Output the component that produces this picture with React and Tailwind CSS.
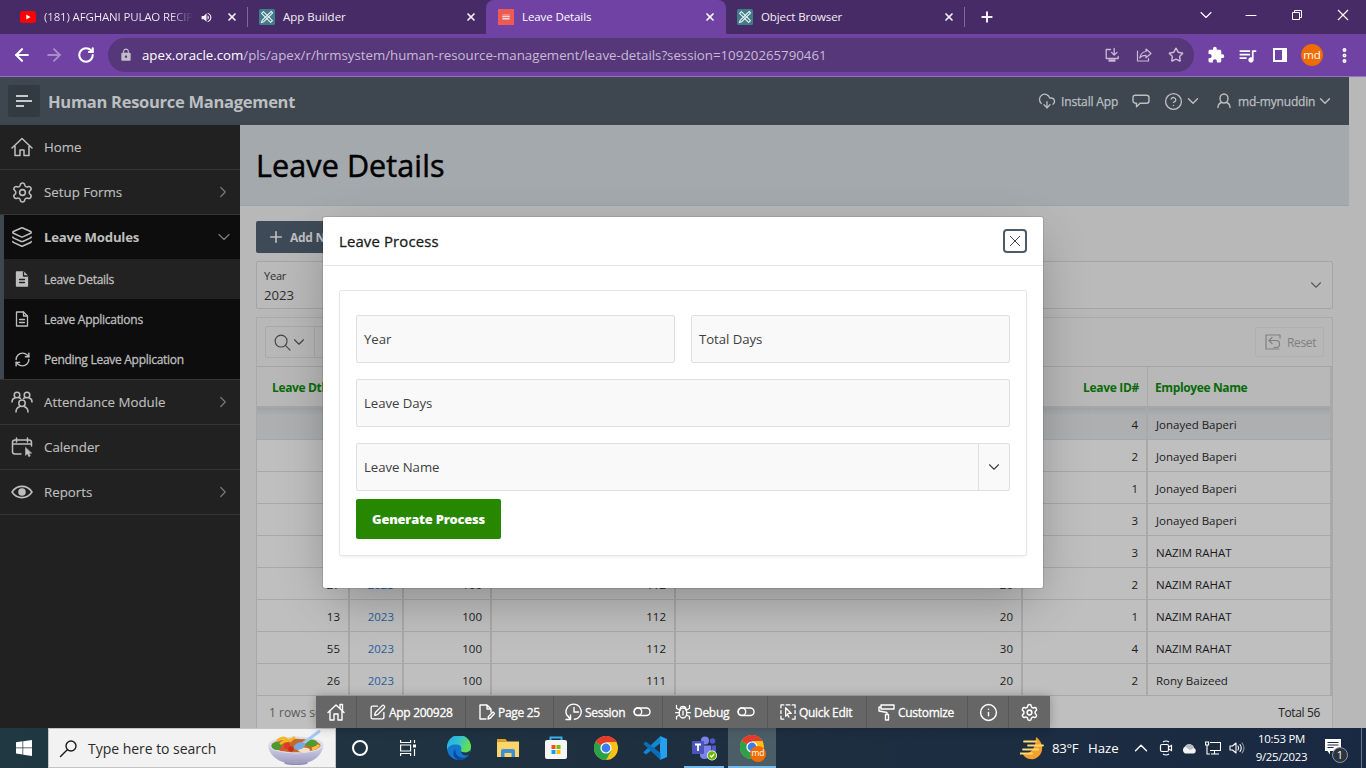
import React from "react";
import {
  ArrowLeft, ArrowRight, RotateCw, X, Plus, ChevronDown, ChevronRight, ChevronUp, Minus,
  Star, EllipsisVertical, Settings, Search, Layers, RefreshCw,
  CloudDownload, CircleHelp, Info, SquarePen,
} from "lucide-react";
import { MdExtension, MdLock, MdQueueMusic, MdVolumeUp } from "react-icons/md";

function Svg({ className = "", box = "0 0 24 24", w = 1.5, children }) {
  return (
    <svg viewBox={box} className={`shrink-0 ${className}`} fill="none" stroke="currentColor" strokeWidth={w} strokeLinecap="round" strokeLinejoin="round">
      {children}
    </svg>
  );
}

/* ---------- Browser chrome ---------- */

function ApexIcon() {
  return (
    <svg viewBox="0 0 16 16" className="size-4 shrink-0">
      <rect width="16" height="16" rx="1.5" fill="#437c89" />
      <g fill="none" stroke="#e8f2f3" strokeWidth="1.1" strokeLinejoin="round">
        <path d="M2.6 4.4 4.4 2.6 13.4 11.6 11.6 13.4z" />
        <path d="M12.2 2.4 13.6 3.8 4.6 12.8 2.4 13.6 3.2 11.4z" />
      </g>
    </svg>
  );
}

function TabClose() {
  return <X className="size-3 shrink-0" strokeWidth={3.4} />;
}

function TabStrip() {
  return (
    <div className="flex h-[34px] items-center bg-[#472b66] text-[11.5px] text-[#f3eff7]">
      <div className="flex h-[20px] w-[248px] shrink-0 items-center border-r border-[#7d699a] pl-5 pr-[9px]">
        <svg viewBox="0 0 16 12" className="h-3 w-4 shrink-0"><rect width="16" height="12" rx="3" fill="#f00" /><path d="M6.3 3.6 10.5 6 6.3 8.4z" fill="#fff" /></svg>
        <span className="ml-2 w-[149px] overflow-hidden whitespace-nowrap bg-linear-to-r from-[#f3eff7] from-85% to-[#472b66] bg-clip-text tracking-[-0.16px] text-transparent">(181) AFGHANI PULAO RECIPE</span>
        <MdVolumeUp className="ml-[7px] size-[13px] shrink-0" />
        <span className="ml-auto"><TabClose /></span>
      </div>
      <div className="flex w-[238px] shrink-0 items-center pl-[11px] pr-[9px]">
        <ApexIcon /><span className="ml-2">App Builder</span><span className="ml-auto"><TabClose /></span>
      </div>
      <div className="flex h-[34px] w-[240px] shrink-0 items-center rounded-t-lg bg-[#6f42a3] pl-3 pr-[10px] text-white">
        <svg viewBox="0 0 16 16" className="size-4 shrink-0"><rect width="16" height="16" fill="#ec5b53" /><path d="M4.5 5.8h7" stroke="#f39c97" strokeWidth="1" /><path d="M4.2 7.500h7.600M4.500 9.700h7" stroke="#fbdad8" strokeWidth="1.600" /></svg>
        <span className="ml-2 tracking-[-0.1px]">Leave Details</span><span className="ml-auto"><TabClose /></span>
      </div>
      <div className="flex h-[20px] w-[239px] shrink-0 items-center border-r border-[#7d699a] pl-[11px] pr-[9px]">
        <ApexIcon /><span className="ml-2 tracking-[-0.1px]">Object Browser</span><span className="ml-auto"><TabClose /></span>
      </div>
      <Plus className="ml-[14px] size-4" strokeWidth={3} />
      <div className="ml-auto flex items-center pb-[5px] text-white">
        <ChevronDown className="mr-[29px] size-5" strokeWidth={1.3} />
        <Svg className="mr-[34px] size-3" box="0 0 12 12" w={1}><path d="M1 6.500h10" /></Svg>
        <svg viewBox="0 0 12 12" className="mr-[34px] size-3" fill="none" stroke="currentColor"><path d="M1.5 3.5h7v7h-7zM3.5 3.5v-2h7v7h-2" /></svg>
        <svg viewBox="0 0 12 12" className="mr-[17px] size-3" fill="none" stroke="currentColor" strokeWidth="1.2"><path d="M1 1 11 11M11 1 1 11" /></svg>
      </div>
    </div>
  );
}

function AddressBar() {
  return (
    <div className="flex h-[43px] items-center border-b border-[#9873bd] bg-[#6f42a3] text-white">
      <ArrowLeft className="ml-3 size-5" strokeWidth={2.6} />
      <ArrowRight className="ml-3 size-5 text-[#a98bc9]" strokeWidth={2.3} />
      <RotateCw className="ml-[13px] size-[18px]" strokeWidth={2.8} />
      <div className="ml-[13px] flex h-[34px] w-[1086px] items-center rounded-full bg-[#56377a] pl-[11px] text-[13.25px] text-[#c8bad6]">
        <MdLock className="size-[14px] text-[#c1bcc8]" />
        <span className="ml-[9px] whitespace-nowrap pt-px"><span className="text-white">apex.oracle.com</span>/pls/apex/r/hrmsystem/human-resource-management/leave-details?session=10920265790461</span>
        <div className="ml-auto mr-[10px] flex items-center gap-4">
          <Svg className="size-4" box="0 0 16 16" w={1.3}><path d="M6.5 2.5H2.2v9h12V9.5M10.2 1.5v6.2M7.5 5.4l2.7 2.7 2.8-2.7" /><path d="M4.500 13.500h7" strokeWidth="2.500" strokeLinecap="butt" /></Svg>
          <Svg className="size-4" box="0 0 16 16" w={1.200}><path d="M1.5 4v10h11v-2.5" /><path d="M10 2l5 4.500-5 4.300V8.400C7 8.300 5 9.300 3.800 11 4.300 7.500 6.300 5 10 4.500z" /></Svg>
          <Star className="size-4" strokeWidth={2.200} />
        </div>
      </div>
      <MdExtension className="ml-[13px] size-[18px]" />
      <MdQueueMusic className="ml-[12px] size-[21px]" />
      <svg viewBox="0 0 14 14" className="ml-[15px] size-[14px]"><path fill="currentColor" fillRule="evenodd" d="M0 0h14v14H0zM2 2v10h7V2z" /></svg>
      <div className="ml-[14px] flex size-[22px] items-center justify-center rounded-full bg-[#ee6c02] pb-px text-[11.5px]">md</div>
      <EllipsisVertical className="ml-[12px] size-[19px]" strokeWidth={3} />
    </div>
  );
}

/* ---------- Application ---------- */

function AppHeader() {
  return (
    <header className="flex h-12 w-[1349px] items-center bg-[#3e474f] text-[#bcbfc1]">
      <div className="ml-2 flex size-8 items-center justify-center rounded-xs bg-[#333b42]">
        <Svg className="size-4 text-[#c6c8ca]" box="0 0 16 16" w={2}><path d="M0 3h12M0 8h16M0 13h8" strokeLinecap="butt" /></Svg>
      </div>
      <h1 className="ml-2 pt-[2px] text-[16.500px] font-bold tracking-[-0.280px]">Human Resource Management</h1>
      <div className="ml-auto mr-[15px] flex items-center text-[12px] [-webkit-text-stroke:0.25px]">
        <CloudDownload className="size-[18px]" strokeWidth={1.700} />
        <span className="ml-[5px] w-[71px] whitespace-nowrap pt-[2px] tracking-[-0.150px]">Install App</span>
        <Svg className="size-[18px]" box="0 0 18 18" w={1.400}><path d="M3.500 3.200h11q2.500 0 2.500 2.500v3q0 2.500-2.500 2.500H8l-3.500 3.500v-3.500h-1Q1 11.200 1 8.700v-3q0-2.500 2.500-2.500z" /></Svg>
        <CircleHelp className="ml-[14px] size-[19px]" strokeWidth={1.700} />
        <ChevronDown className="ml-px size-[18px]" strokeWidth={1.900} />
        <Svg className="ml-[14px] size-[16px]" box="0 0 16 16" w={1.400}><ellipse cx="8" cy="5.500" rx="4" ry="4.500" /><path d="M5.500 9.500C3 10.300 2 11.800 2 14.500M10.500 9.500C13 10.300 14 11.800 14 14.500" /></Svg>
        <span className="ml-[6px] w-[78px] whitespace-nowrap pt-[2px] tracking-[-0.180px]">md-mynuddin</span>
        <ChevronDown className="size-[18px]" strokeWidth={1.900} />
      </div>
    </header>
  );
}

const HomeGlyph = () => (
  <Svg className="size-[22px]" box="0 0 22 22" w={1.5}><path d="M1 12 11 2.500 21 12M4 10v9.500h5v-5.500h4v5.500h5V10" /></Svg>
);
const TeamGlyph = () => (
  <Svg className="size-[22px]" box="0 0 22 22" w={1.500}>
    <circle cx="6" cy="4" r="2.800" /><circle cx="16" cy="4" r="2.800" /><circle cx="11" cy="12.300" r="3.200" />
    <path d="M1 11c0-2.300 1-3.700 3-4M21 11c0-2.300-1-3.700-3-4M9.500 7.500C9 7 8.500 6.800 8 6.700M12.500 7.500c.5-.5 1-.7 1.500-.8M5 21c0-3 1-4.500 3.500-5.300M17 21c0-3-1-4.500-3.500-5.300" />
  </Svg>
);
const CalendarGlyph = () => (
  <Svg className="size-[22px]" box="0 0 22 22" w={1.500}>
    <path d="M10 18H4q-2.500 0-2.500-2.500v-9Q1.500 4 4 4h14q2.500 0 2.500 2.500V10M1.500 8h19M5.500 2v4M16.500 2v4" />
    <path d="M14.500 11.500v8l2-1.800 1.300 3 1.500-.7-1.300-2.800h2.500z" fill="currentColor" strokeWidth=".5" />
  </Svg>
);
const FileGlyph = ({ solid }) => (
  <Svg className="size-4" box="0 0 16 16" w={1.300}>
    <path d="M2.500 1h7l4 4v10h-11z" fill={solid ? "currentColor" : "none"} />
    <path d="M9.500 1v4h4M5.500 8.500h5M5.500 11.500h5" stroke={solid ? "#212121" : "currentColor"} />
  </Svg>
);

function NavItem({ icon, label, arrow }) {
  return (
    <div className="flex h-[45px] items-center border-b border-[#363636] pl-[11px] pr-[8px]">
      <span className="flex w-[33px]">{icon}</span>
      <span className="pt-px text-[13.300px] [-webkit-text-stroke:0.15px]">{label}</span>
      {arrow && <ChevronRight className="ml-auto size-[18px] text-[#777]" strokeWidth={1.700} />}
    </div>
  );
}

function SubItem({ icon, label, active }) {
  return (
    <div className={`flex h-10 items-center pl-[10px] text-[12px] tracking-[-0.280px] [-webkit-text-stroke:0.3px] ${active ? "bg-[#222]" : ""}`}>
      <span className="flex w-[30px]">{icon}</span><span className="pt-[2px]">{label}</span>
    </div>
  );
}

function Sidebar() {
  return (
    <nav className="h-full w-60 shrink-0 bg-[#212121] text-[#bebebe]">
      <NavItem icon={<HomeGlyph />} label="Home" />
      <NavItem icon={<Settings className="size-[23px]" strokeWidth={1.600} />} label="Setup Forms" arrow />
      <div className="border-b border-[#363636]">
        <div className="border-l-4 border-[#3e474f] bg-[#0d0d0d]">
          <div className="flex h-[44px] items-center pl-[7px] pr-[6px]">
            <span className="flex w-[33px]"><Layers className="size-[22px]" strokeWidth={1.700} /></span>
            <span className="pt-[2px] text-[13.200px] font-bold tracking-[-0.220px]">Leave Modules</span>
            <ChevronDown className="ml-auto size-5 text-[#777]" strokeWidth={1.600} />
          </div>
          <SubItem icon={<FileGlyph solid />} label="Leave Details" active />
          <SubItem icon={<FileGlyph />} label="Leave Applications" />
          <SubItem icon={<RefreshCw className="size-[17px]" strokeWidth={2} />} label="Pending Leave Application" />
        </div>
      </div>
      <NavItem icon={<TeamGlyph />} label="Attendance Module" arrow />
      <NavItem icon={<CalendarGlyph />} label="Calender" />
      <NavItem icon={<Svg className="size-[22px]" box="0 0 22 22" w={1.600}><path d="M1 11c5-7.500 15-7.500 20 0-5 7.500-15 7.500-20 0z" /><circle cx="11" cy="11" r="3" fill="currentColor" /></Svg>} label="Reports" arrow />
    </nav>
  );
}

const ROWS = [
  ["", "", "", "", "", "4", "Jonayed Baperi"],
  ["", "", "", "", "", "2", "Jonayed Baperi"],
  ["", "", "", "", "", "1", "Jonayed Baperi"],
  ["", "", "", "", "", "3", "Jonayed Baperi"],
  ["", "", "", "", "", "3", "NAZIM RAHAT"],
  ["27", "2023", "100", "112", "20", "2", "NAZIM RAHAT"],
  ["13", "2023", "100", "112", "20", "1", "NAZIM RAHAT"],
  ["55", "2023", "100", "112", "30", "4", "NAZIM RAHAT"],
  ["26", "2023", "100", "111", "20", "2", "Rony Baizeed"],
];
const GRID = "grid grid-cols-[93px_54px_88px_184px_347px_125px_184px]";

function LeaveGrid() {
  return (
    <section className="mt-2 flex h-[411px] w-[1077px] flex-col border border-b-0 border-[#a9a9a9] bg-[#b8b8b8]">
      <div className="flex h-[48px] shrink-0 items-center justify-between pl-2 pr-[8px]">
        <div className="flex h-8 w-[300px] rounded-xs border border-[#a9a9a9] text-[#444]">
          <div className="flex w-[49px] items-center border-r border-[#a9a9a9] pl-2">
            <Svg className="size-[17px]" box="0 0 18 18" w={1.200}><circle cx="7.500" cy="7.500" r="6.300" /><path d="m12 12 5 5" /></Svg>
            <ChevronDown className="-ml-px size-[18px]" strokeWidth={1.500} />
          </div>
        </div>
        <div className="flex h-[30px] w-[69px] items-center rounded-xs border border-[#b0b0b0] pl-[9px] text-[12px] text-[#808080]">
          <Svg className="size-4" box="0 0 16 16" w={1.200}><path d="M15 4V1H1v14h13M4 6.500h7.500q3 0 3 3.500t-3 3.500H9M7 3.500l-3 3 3 3" /></Svg>
          <span className="ml-[6px] pt-px tracking-[-0.350px]">Reset</span>
        </div>
      </div>
      <div className={`${GRID} h-[42px] shrink-0 items-stretch border-b-2 border-t border-b-[#a6a7a7] border-t-[#a5a5a5] text-[12px] font-bold text-[#076b07]`}>
        <span className="flex items-center overflow-hidden whitespace-nowrap pl-[15px] pt-[2px] tracking-[-0.350px]">Leave Dtl</span>
        <span /><span /><span /><span />
        <span className="flex items-center justify-end border-r border-[#a9a9a9] pr-2 pt-[2px] tracking-[-0.300px]">Leave ID#</span>
        <span className="flex items-center border-r-2 border-[#a9a9a9] pl-[7px] pt-[2px] tracking-[-0.380px]">Employee Name</span>
      </div>
      {ROWS.map((row, i) => (
        <div key={i} className={`${GRID} h-8 shrink-0 border-b border-[#a8a8a8] text-[11.500px] text-[#1c1c1c] ${i === 0 ? "bg-linear-to-b from-[#a2a4a4] to-[#adafb1] to-25%" : "bg-[#bfbfbf]"}`}>
          {row.map((cell, j) => (
            <span key={j} className={`flex items-center border-r-2 border-[#a9a9a9] pt-[3px] ${j === 6 ? "pl-2" : "justify-end pr-[8px]"} ${j === 1 ? "text-[#27619c]" : ""}`}>{cell}</span>
          ))}
        </div>
      ))}
      <div className="flex flex-1 items-center justify-between bg-[#bfbfbf] pl-3 pr-[12px] pt-[2px] text-[12px]">
        <span className="text-[#5a5a5a]">1 rows se</span>
        <span className="tracking-[-0.350px] text-[#222]">Total 56</span>
      </div>
    </section>
  );
}

function Page() {
  return (
    <main className="flex min-w-0 flex-1 flex-col bg-[#b8b8b8]">
      <div className="flex h-[81px] w-[1109px] shrink-0 items-center border-b border-[#9ea2a5] bg-[#a4a9ad] pl-4">
        <h2 className="pt-px text-[30.500px] tracking-[0.100px] text-black [-webkit-text-stroke:0.5px]">Leave Details</h2>
      </div>
      <div className="pl-4">
        <div className="mt-[15px] flex h-8 w-[80px] items-center overflow-hidden whitespace-nowrap rounded-xs bg-[#3e4a57] pl-[11px] text-[12px] font-bold text-[#bfbfbf]">
          <Plus className="size-[18px] shrink-0" strokeWidth={2.200} /><span className="ml-[5px] pt-px tracking-[-0.300px]">Add N</span>
        </div>
        <div className="mt-2 flex h-[48px] w-[1077px] items-center justify-between rounded-xs border border-[#a5a5a5] bg-[#bababa] pl-[7px] pr-[7px]">
          <div className="flex flex-col pt-[3px] text-[#2d2d2d]">
            <span className="text-[11px] leading-[18px] tracking-[-0.200px]">Year</span>
            <span className="text-[13.200px] leading-[21px]">2023</span>
          </div>
          <ChevronDown className="size-[18px] text-[#5a5a5a]" strokeWidth={1.500} />
        </div>
        <LeaveGrid />
      </div>
    </main>
  );
}

function Field({ label, select }) {
  return (
    <div className="flex h-12 items-stretch rounded-xs border border-[#dfdfdf] bg-[#f9f9f9] text-[13.200px] text-[#404040]">
      <span className="flex flex-1 items-center pl-[7px] pt-[2px] tracking-[-0.050px]">{label}</span>
      {select && (
        <span className="flex w-[31px] items-center justify-center border-l border-[#dfdfdf]"><ChevronDown className="size-[18px]" strokeWidth={1.500} /></span>
      )}
    </div>
  );
}

function Dialog() {
  return (
    <div className="absolute left-[323px] top-[217px] h-[371px] w-[720px] rounded-xs bg-white shadow-[0_0_0_1px_rgba(0,0,0,0.1),0_16px_48px_-8px_rgba(0,0,0,0.3)]">
      <div className="flex h-[49px] items-center justify-between border-b border-[#e6e6e6] px-4">
        <span className="text-[14.900px] tracking-[0.150px] text-[#1b1b1b] [-webkit-text-stroke:0.3px]">Leave Process</span>
        <span className="flex size-6 items-center justify-center rounded-[4px] border-2 border-[#4b5b69] text-[#444]">
          <svg viewBox="0 0 12 12" className="size-3" fill="none" stroke="currentColor"><path d="M1 1 11 11M11 1 1 11" /></svg>
        </span>
      </div>
      <div className="mx-4 mt-6 h-[266px] rounded-xs border border-[#e6e6e6] px-4 pt-6 shadow-[0_2px_4px_-2px_rgba(0,0,0,0.12)]">
        <div className="grid grid-cols-2 gap-4">
          <Field label="Year" />
          <Field label="Total Days" />
          <div className="col-span-2"><Field label="Leave Days" /></div>
          <div className="col-span-2"><Field label="Leave Name" select /></div>
        </div>
        <div className="mt-2 flex h-10 w-[145px] items-center justify-center whitespace-nowrap rounded-xs bg-[#278701] pt-px text-[12.900px] font-extrabold tracking-[-0.200px] text-white">Generate Process</div>
      </div>
    </div>
  );
}

const Toggle = () => (
  <svg viewBox="0 0 18 10" className="h-[10px] w-[18px] shrink-0" fill="none" stroke="currentColor" strokeWidth="1.400"><rect x="1" y="1" width="16" height="7.500" rx="3.700" /><circle cx="5" cy="4.700" r="3.700" /></svg>
);

function DevToolbar() {
  const cell = "flex items-center border-r border-[#575757]";
  return (
    <div className="absolute left-[316px] top-[696px] flex h-8 w-[734px] items-stretch whitespace-nowrap bg-[#666] text-[12px] tracking-[-0.300px] text-white shadow-[0_0_10px_rgba(0,0,0,0.25)] [-webkit-text-stroke:0.3px]">
      <div className={`${cell} w-[41px] justify-center`}><Svg className="size-[18px]" box="0 0 18 18" w={1.400}><path d="M1 9.500 9 2l8 7.500M3 8v9h4v-6h4v6h4V8M13 5.500V1.500h2.500V8" /></Svg></div>
      <div className={`${cell} w-[109px] pl-[12px]`}><SquarePen className="size-[17px]" strokeWidth={1.900} /><span className="ml-[3px] pt-[2px]">App 200928</span></div>
      <div className={`${cell} w-[88px] pl-[13px]`}>
        <Svg className="size-4" box="0 0 16 16" w={1.400}><path d="M7 15H1V1h7l4 4v3M8 1v4h4M9 15l.5-2.500L14 8l1.500 1.500L11.500 14z" /></Svg><span className="ml-[3px] pt-[2px]">Page 25</span>
      </div>
      <div className={`${cell} w-[109px] pl-[11px]`}>
        <Svg className="size-[18px]" box="0 0 18 18" w={1.400}><path d="M2 12.500A7.600 7.600 0 1 1 9.500 16.300M9 4.500V9h4.500M1 16.500h4.500V12M5.500 16.500 2.500 12.500" /></Svg><span className="ml-[2px] w-[40px] pt-[2px]">Session</span><span className="ml-[8px]"><Toggle /></span>
      </div>
      <div className={`${cell} w-[105px] pl-[12px]`}>
        <Svg className="size-4" box="0 0 16 16" w={1.300}><ellipse cx="8" cy="9" rx="3.800" ry="5" /><path d="M5 5.500C5 3 6.500 2.500 8 2.500s3 .5 3 3M8 7v4M1.500 1.500v2.700L5 6.500M14.500 1.500v2.700L11 6.500M.7 8.700h3.500M15.300 8.700h-3.500M1.500 15v-2.500L4.700 11M14.500 15v-2.500L11.300 11" /></Svg>
        <span className="ml-[3px] w-[36px] pt-[2px]">Debug</span><span className="ml-[7px]"><Toggle /></span>
      </div>
      <div className={`${cell} w-[99px] pl-[12px]`}>
        <Svg className="size-4" box="0 0 17 17" w={1.400}><path d="M1 4V1h3M6.500 1h4M13 1h3v3M16 7v3M16 13v3h-3M4 16H1v-3M1 10V7" /><path d="M6 4v9l2-2 1.500 3M6 4l6 6H8.500" /></Svg><span className="ml-[3px] pt-[2px]">Quick Edit</span>
      </div>
      <div className={`${cell} w-[101px] pl-[11px]`}>
        <Svg className="size-[17px]" box="0 0 17 17" w={1.400}><path d="M3 1h13v4H3zM3 3H1v4l8 1.500v2M7.500 10.500h3V16h-3z" /></Svg><span className="ml-[3px] pt-[2px]">Customize</span>
      </div>
      <div className={`${cell} w-[41px] justify-center`}><Info className="size-[19px]" strokeWidth={1.800} /></div>
      <div className="flex flex-1 items-center justify-center pr-px"><Settings className="size-[19px]" strokeWidth={1.900} /></div>
    </div>
  );
}

/* ---------- Taskbar ---------- */

function Bowl() {
  return (
    <svg viewBox="0 0 56 36" className="h-9 w-14">
      <defs><linearGradient id="bowl" x1="0" y1="0" x2="0" y2="1"><stop offset="0" stopColor="#d9d7ea" /><stop offset="1" stopColor="#9c98bf" /></linearGradient></defs>
      <ellipse cx="28" cy="33" rx="12" ry="2" fill="#8f8bb0" />
      <path d="M0 15C1 27 13 34 28 34S54 27 55.500 15z" fill="url(#bowl)" />
      <ellipse cx="28" cy="15" rx="27.500" ry="8.500" fill="#dedcec" />
      <ellipse cx="28" cy="15.500" rx="24.500" ry="6.800" fill="#c26a2c" />
      <ellipse cx="9" cy="16" rx="5.500" ry="4" fill="#4b9a2d" /><ellipse cx="43" cy="13" rx="6.500" ry="3.500" fill="#4c9d30" />
      <path d="M9 11q5-5 9-2t9-2M12 14q6-5 12-3" fill="none" stroke="#f5b622" strokeWidth="2.600" />
      <path d="M44 19q5-1 7-4" stroke="#f7c33d" strokeWidth="3" fill="none" />
      <circle cx="19" cy="16" r="3.200" fill="#df3a27" /><circle cx="23" cy="19" r="2.800" fill="#c92c1d" /><circle cx="14" cy="19" r="2.300" fill="#e3502e" />
      <ellipse cx="36" cy="20" rx="6" ry="2.500" fill="#f8dfc6" />
      <path d="M33 15 51 1.500" stroke="#a5c8f0" strokeWidth="3" strokeLinecap="round" />
      <ellipse cx="31.500" cy="16" rx="6" ry="3.500" fill="#79a9dc" transform="rotate(-20 31.500 16)" />
    </svg>
  );
}

function ChromeLogo() {
  return (
    <svg viewBox="0 0 24 24" className="size-6">
      <circle cx="12" cy="12" r="12" fill="#fbc116" />
      <path d="M12 12 1.600 6A12 12 0 0 1 22.400 6z" fill="#e33b2e" />
      <path d="M12 12 1.600 6A12 12 0 0 0 12 24l5.200-9z" fill="#2ba14b" />
      <path d="M12 6h10.400L17.200 15z" fill="#fbc116" /><circle cx="12" cy="12" r="5.600" fill="#fff" /><circle cx="12" cy="12" r="4.400" fill="#3b7ded" />
    </svg>
  );
}

function Taskbar() {
  const slot = "flex h-10 items-center justify-center shrink-0";
  return (
    <footer className="flex h-10 w-full items-center bg-linear-to-r from-[#203842] via-[#1e2f40] to-[#1a2942] text-white">
      <div className={`${slot} w-12`}><svg viewBox="0 0 16 16" className="size-4" fill="#fff"><path d="M0 2.200 6.500 1.300v6.200H0zM7.200 1.200 16 0v7.500H7.200zM0 8.200h6.500v6.300L0 13.600zM7.200 8.200H16V16l-8.800-1.300z" /></svg></div>
      <div className="flex h-10 w-72 shrink-0 items-center border border-[#c4c4c4] bg-[#f2f2f2] pl-[10px] pr-[11px] text-[#2b2b2b]">
        <Svg className="size-[19px] text-[#1b1b1b]" box="0 0 19 19" w={1.400}><circle cx="12" cy="7" r="5" /><path d="M8.300 10.700 1.500 17.500" /></Svg>
        <span className="ml-[10px] text-[14px] tracking-[-0.030px]">Type here to search</span>
        <span className="ml-auto"><Bowl /></span>
      </div>
      <div className={`${slot} w-12`}><div className="size-4 rounded-full border-2 border-white" /></div>
      <div className={`${slot} w-[48px]`}><svg viewBox="0 0 16 16" className="size-4" fill="none" stroke="#fff" strokeWidth="1.200"><path d="M.6 0v2.500h10V0M.6 5h10v6H.6zM.6 16v-2.500h10V16M14.500 0v3M14.500 9v7" /><path d="M13 4.500h3v3h-3z" fill="#fff" stroke="none" /></svg></div>
      <div className={`${slot} w-[53px]`}>
        <svg viewBox="0 0 24 24" className="size-6">
          <defs><linearGradient id="edge" x1="0" y1="0" x2="1" y2=".4"><stop offset="0" stopColor="#2aa8e6" /><stop offset=".5" stopColor="#2fc0d5" /><stop offset="1" stopColor="#66e04d" /></linearGradient></defs>
          <circle cx="12" cy="12" r="12" fill="#1177cf" />
          <path d="M0 11A12 12 0 0 1 24 11c0 3.500-2.500 5.500-6 5.500-3 0-4.500-1-4-2.200.8-1.500.5-5.300-4-5.800C5 8 1 10 0 14z" fill="url(#edge)" />
          <path d="M8.500 13c-1 4 2 8.500 7 8.800 2 0 4-.6 6-2.500A12 12 0 0 1 11 24C6 22 5 16 8.500 13z" fill="#0d4a9e" />
          <path d="M14 14.300c-.5 1.200 1 2.200 4 2.200 2 0 3.500-.6 5-1.500v3.300c-5 2.700-9 .5-9-4z" fill="#203842" />
        </svg>
      </div>
      <div className={`${slot} w-[45px]`}>
        <svg viewBox="0 0 22 20" className="h-5 w-[22px]"><path d="M0 1h8.500l2 2.500H0z" fill="#e6a117" /><path d="M0 3.500h22V19H0z" fill="#ffd569" /><path d="M4 19v-6q0-2 2-2h10q2 0 2 2v6h-3.500v-4h-7v4z" fill="#3f8fd8" /></svg>
      </div>
      <div className={`${slot} w-[52px]`}>
        <svg viewBox="0 0 24 24" className="size-6"><path d="M6.500 5V1.500h11V5" fill="none" stroke="#35b3ea" strokeWidth="2" /><rect x="1" y="4" width="22" height="19" rx="2" fill="#f5f5f5" /><path d="M7.500 9h4v4h-4z" fill="#f25022" /><path d="M12.500 9h4v4h-4z" fill="#7fba00" /><path d="M7.500 14h4v4h-4z" fill="#00a4ef" /><path d="M12.500 14h4v4h-4z" fill="#ffb900" /></svg>
      </div>
      <div className={`${slot} w-[48px]`}><ChromeLogo /></div>
      <div className={`${slot} w-[49px]`}>
        <svg viewBox="0 0 24 24" className="size-6"><path d="M17 0 24 3v18l-7 3z" fill="#25a0ee" /><path d="M17.500 0v7L3 18.500.3 16.300z" fill="#1287d2" /><path d="M.3 7.700 3 5.500 17.500 17v7z" fill="#0a6fb8" /></svg>
      </div>
      <div className="flex h-10 w-[49px] shrink-0 justify-center">
        <div className="flex h-10 w-10 items-center justify-center border-b-2 border-[#76b9ed]">
          <svg viewBox="0 0 26 26" className="mt-1 size-[26px]">
            <circle cx="14" cy="4.500" r="4" fill="#7b83eb" /><circle cx="21.500" cy="5" r="2.800" fill="#5059c9" />
            <path d="M9 9.500h11V18q-2 5-6.500 5T9 19z" fill="#7b83eb" /><path d="M20.500 9.500H25v7q-1 3-4.500 3z" fill="#5059c9" />
            <rect x="1" y="5" width="12" height="13" rx="1" fill="#4b53bc" /><path d="M4 8.500h6M7 8.500V15" stroke="#fff" strokeWidth="1.800" />
            <circle cx="21" cy="19.500" r="5" fill="#fff" /><circle cx="21" cy="19.500" r="4.300" fill="#6bb700" /><path d="m19 19.500 1.500 1.500 2.700-3" stroke="#fff" strokeWidth="1.300" fill="none" />
          </svg>
        </div>
      </div>
      <div className={`${slot} relative w-12 border-b-2 border-[#76b9ed] bg-[#4b5d67]`}>
        <ChromeLogo />
        <span className="absolute left-[22px] top-[18px] flex size-4 items-center justify-center rounded-full bg-[#ee6c02] pb-px text-[8.500px]">md</span>
      </div>
      <div className="ml-auto flex h-10 items-center">
        <svg viewBox="0 0 24 24" className="mr-2 size-6"><path d="M16 1C25 7 24 20 14 23 8 24 4 21 3 18c9 0 13-7 13-17z" fill="#f5a02a" /><path d="M4 5.500h12M8 9.500h15M3 13.500h15M0 17.500h12" stroke="#ffd873" strokeWidth="1.800" strokeLinecap="round" /></svg>
        <span className="w-[36px] whitespace-nowrap pt-px text-[13.200px] tracking-[-0.300px]">83°F</span>
        <span className="w-[42px] pt-px text-[13.200px]">Haze</span>
        <ChevronUp className="size-[22px]" strokeWidth={1.500} />
        <svg viewBox="0 0 14 16" className="ml-[7px] h-4 w-[14px]" fill="none" stroke="#fff" strokeWidth="1.200"><rect x="1.500" y="4.500" width="8" height="7" rx="1.500" /><path d="m9.500 7 3-1.500v5l-3-1.500M4 2q3-2 6 0M4 14q3 2 6 0" /></svg>
        <svg viewBox="0 0 16 11" className="ml-[8px] h-[11px] w-4"><path d="M4 10.500a4 4 0 0 1 0-7A5 5 0 0 1 13 5a3 3 0 0 1 0 5.500z" fill="#f3f3f3" /><path d="M4 3.500A5 5 0 0 1 13 5L9 7z" fill="#b8bcc2" /></svg>
        <svg viewBox="0 0 16 14" className="ml-2 h-[14px] w-4" fill="none" stroke="#fff" strokeWidth="1.100"><path d="M5 1.500h10.500v8H5M9.500 9.500V13M6 13h8M.6 1h3v3h-3zM2 4v9h3" /></svg>
        <Svg className="ml-2 size-4" box="0 0 16 16" w={1.100}><path d="M1 6h2.500L7 3v10L3.500 10H1zM9 6q1.300 2 0 4M11 4.500q2.500 3.500 0 7" /><path d="M13 3q4 5 0 10" opacity=".5" /></Svg>
        <div className="ml-[7px] flex w-[59px] flex-col items-center whitespace-nowrap text-[11.400px] leading-[18px] tracking-[-0.250px]"><span>10:53 PM</span><span>9/25/2023</span></div>
        <div className="relative ml-[14px] size-6">
          <svg viewBox="0 0 16 16" className="mt-[3px] size-4"><path d="M0 0h16v12H5v3.500L2.500 12H0z" fill="#fff" /><path d="M2.500 3.500h11M2.500 6h11M2.500 8.500h6" stroke="#1a2942" /></svg>
          <span className="absolute left-[7px] top-[11px] flex size-4 items-center justify-center rounded-full border border-[#8f959c] bg-[#2c3440] text-[11px]">1</span>
        </div>
        <div className="ml-[12px] h-10 w-[5px] border-l border-[#69768a]" />
      </div>
    </footer>
  );
}

export default function App() {
  return (
    <div className="relative h-[768px] w-[1366px] overflow-hidden bg-[#b8b8b8] font-['Open_Sans','Noto_Sans',sans-serif]">
      <TabStrip />
      <AddressBar />
      <AppHeader />
      <div className="flex h-[603px] overflow-hidden"><Sidebar /><Page /></div>
      <Taskbar />
      <Dialog />
      <DevToolbar />
    </div>
  );
}
